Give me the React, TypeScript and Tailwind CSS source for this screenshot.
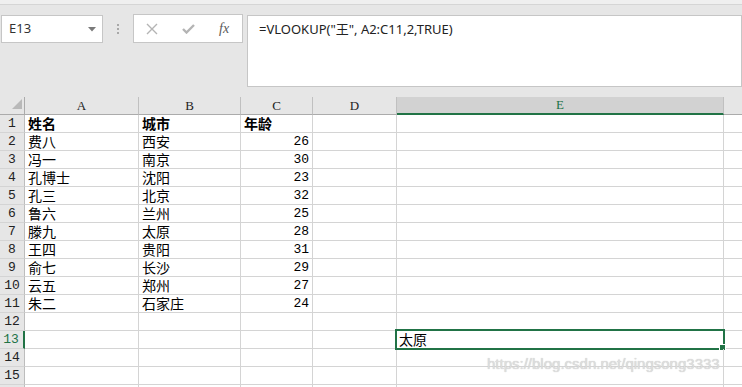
import React from "react";

const cjk = '"Noto Sans CJK SC", "Noto Sans", sans-serif';
const mono = '"Liberation Mono", "DejaVu Sans Mono", monospace';

type Row = [string, string, string];
const data: Row[] = [
  ["姓名", "城市", "年龄"],
  ["费八", "西安", "26"],
  ["冯一", "南京", "30"],
  ["孔博士", "沈阳", "23"],
  ["孔三", "北京", "32"],
  ["鲁六", "兰州", "25"],
  ["滕九", "太原", "28"],
  ["王四", "贵阳", "31"],
  ["俞七", "长沙", "29"],
  ["云五", "郑州", "27"],
  ["朱二", "石家庄", "24"],
  ["", "", ""],
  ["", "", ""],
  ["", "", ""],
  ["", "", ""],
  ["", "", ""],
];

const cols = ["A", "B", "C", "D", "E"];

function Toolbar() {
  return (
    <div className="h-[97px] bg-[#e6e6e6] flex flex-col">
      <div className="h-[5px] bg-[#efefef] border-b border-[#d5d5d5]" />
      <div className="flex items-start mt-[10px]">
        <div className="ml-[1px] w-[102px] h-[28px] bg-white border border-[#c6c6c6] flex items-center justify-between pl-[7px] pr-[6px]">
          <span className="text-[13px] text-[#333]" style={{ fontFamily: '"Noto Sans", sans-serif' }}>E13</span>
          <svg width="8" height="5" viewBox="0 0 8 5"><path d="M0 0 H8 L4 4.5 Z" fill="#7a7a7a" /></svg>
        </div>
        <div className="w-[30px] h-[28px] flex flex-col items-center justify-center gap-[2px]">
          <div className="w-[2px] h-[2px] bg-[#a8a8a8]" />
          <div className="w-[2px] h-[2px] bg-[#a8a8a8]" />
          <div className="w-[2px] h-[2px] bg-[#a8a8a8]" />
        </div>
        <div className="-mt-[1px] w-[110px] h-[29px] bg-white border border-[#c6c6c6] flex items-center">
          <svg className="ml-[12px]" width="12" height="12" viewBox="0 0 12 12">
            <path d="M1 1 L11 11 M11 1 L1 11" stroke="#b4b4b4" strokeWidth="1.4" />
          </svg>
          <svg className="ml-[24px]" width="13" height="10" viewBox="0 0 13 10">
            <path d="M1 5 L4.5 8.5 L12 1" stroke="#b4b4b4" strokeWidth="2.4" fill="none" />
          </svg>
          <span className="ml-[24px] text-[14px] italic text-[#5a5a5a]" style={{ fontFamily: '"Liberation Serif", serif' }}>fx</span>
        </div>
        <div className="ml-[4px] w-[495px] h-[72px] bg-white border border-[#c6c6c6] pl-[11px] pt-[4px]">
          <div className="text-[13px] leading-[18px] text-[#222]" style={{ fontFamily: '"Noto Sans", "Noto Sans CJK SC", sans-serif' }}>=VLOOKUP("王", A2:C11,2,TRUE)</div>
        </div>
      </div>
    </div>
  );
}

function Sheet() {
  return (
    <div className="grid grid-cols-[25px_114px_102px_72px_84px_327px_1fr] bg-white">
      <div className="h-[18px] bg-[#e6e6e6] border-r border-b border-[#ababab] relative">
        <svg className="absolute left-[12px] top-[2px]" width="10" height="10" viewBox="0 0 10 10"><path d="M10 0 V10 H0 Z" fill="#b9b9b9" /></svg>
      </div>
      {cols.map((c) => (
        <div
          key={c}
          className={
            c === "E"
              ? "h-[18px] bg-[#d2d2d2] border-r border-[#c0c0c0] border-b-2 border-b-[#217346] flex items-center justify-center text-[13px] text-[#217346]"
              : "h-[18px] bg-[#e6e6e6] border-r border-[#c0c0c0] border-b border-b-[#ababab] flex items-center justify-center text-[13px] text-[#222]"
          }
          style={{ fontFamily: '"Liberation Serif", serif' }}
        >
          {c}
        </div>
      ))}
      <div className="h-[18px] bg-[#e6e6e6] border-b border-[#ababab]" />

      {data.map((r, i) => {
        const n = i + 1;
        const sel = n === 13;
        const bold = n === 1;
        return (
          <React.Fragment key={n}>
            <div
              className={
                sel
                  ? "h-[18px] bg-[#e6e6e6] border-r-2 border-r-[#217346] border-b border-b-[#d4d4d4] flex items-center justify-center text-[13px] leading-[16px] text-[#217346] pr-[1px]"
                  : "h-[18px] bg-[#e6e6e6] border-r border-r-[#bdbdbd] border-b border-b-[#d4d4d4] flex items-center justify-center text-[13px] leading-[16px] text-[#222]"
              }
              style={{ fontFamily: mono }}
            >
              {n < 16 ? n : ""}
            </div>
            <div className={"h-[18px] border-r border-b border-[#d4d4d4] pl-[3px] flex items-center text-[14px] leading-[17px] text-black" + (bold ? " font-bold" : "")} style={{ fontFamily: cjk }}>
              {r[0]}
            </div>
            <div className={"h-[18px] border-r border-b border-[#d4d4d4] pl-[3px] flex items-center text-[14px] leading-[17px] text-black" + (bold ? " font-bold" : "")} style={{ fontFamily: cjk }}>
              {r[1]}
            </div>
            {bold ? (
              <div className="h-[18px] border-r border-b border-[#d4d4d4] pl-[3px] flex items-center text-[14px] leading-[17px] text-black font-bold" style={{ fontFamily: cjk }}>
                {r[2]}
              </div>
            ) : (
              <div className="h-[18px] border-r border-b border-[#d4d4d4] pr-[3px] flex items-center justify-end text-[13px] leading-[16px] text-black" style={{ fontFamily: mono }}>
                {r[2]}
              </div>
            )}
            <div className="h-[18px] border-r border-b border-[#d4d4d4]" />
            <div className="h-[18px] border-r border-b border-[#d4d4d4] relative">
              {sel && (
                <div className="absolute -left-[2px] -top-[2px] w-[330px] h-[21px] border-2 border-[#217346] pl-[2px] flex items-center text-[14px] leading-[17px] text-black" style={{ fontFamily: cjk }}>
                  太原
                  <div className="absolute -right-[3px] -bottom-[3px] w-[5px] h-[5px] bg-[#217346] border border-white box-content" />
                </div>
              )}
            </div>
            <div className="h-[18px] border-b border-[#d4d4d4]" />
          </React.Fragment>
        );
      })}
    </div>
  );
}

export default function App() {
  return (
    <div lang="zh-CN" className="w-[742px] h-[387px] overflow-hidden relative bg-white">
      <Toolbar />
      <Sheet />
      <div
        className="absolute left-[487px] top-[355px] text-[15px] leading-[18px] text-[#dedede] pointer-events-none"
        style={{ fontFamily: '"Liberation Sans", Arial, sans-serif', textShadow: "0 0 1px #bdbdbd" }}
      >
        https://blog.csdn.net/qingsong3333
      </div>
    </div>
  );
}
